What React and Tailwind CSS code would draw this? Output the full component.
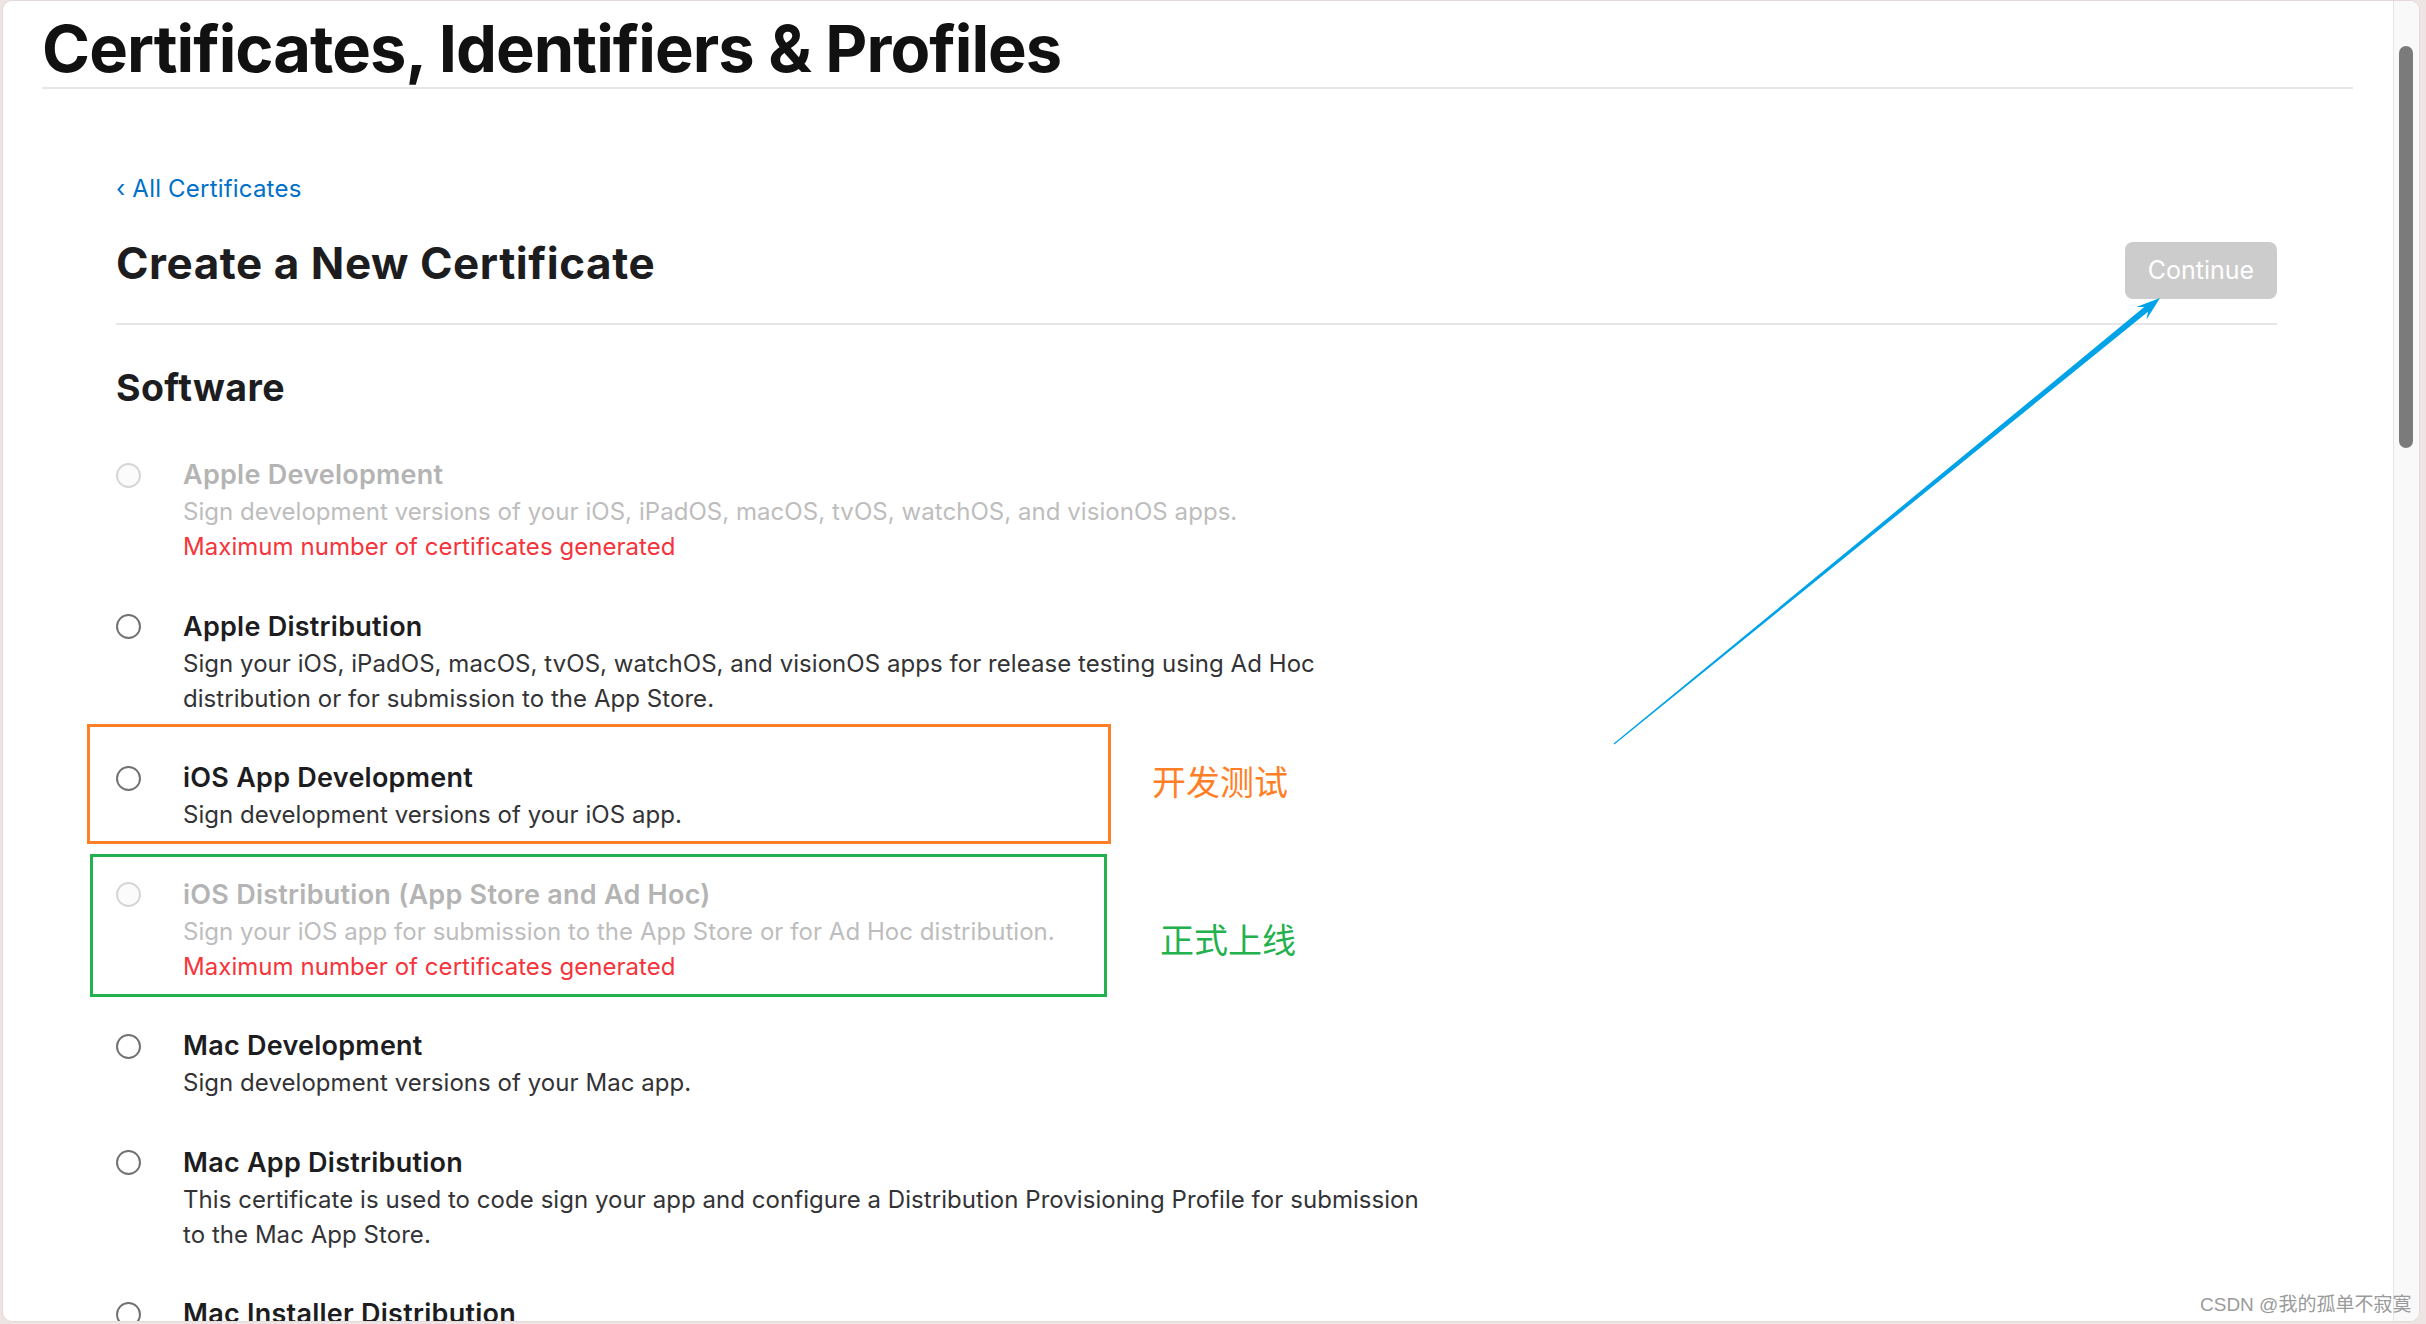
import React from "react";

const items = [
  {
    title: "Apple Development",
    lines: ["Sign development versions of your iOS, iPadOS, macOS, tvOS, watchOS, and visionOS apps."],
    disabled: true,
  },
  {
    title: "Apple Distribution",
    lines: [
      "Sign your iOS, iPadOS, macOS, tvOS, watchOS, and visionOS apps for release testing using Ad Hoc",
      "distribution or for submission to the App Store.",
    ],
  },
  {
    title: "iOS App Development",
    lines: ["Sign development versions of your iOS app."],
  },
  {
    title: "iOS Distribution (App Store and Ad Hoc)",
    lines: ["Sign your iOS app for submission to the App Store or for Ad Hoc distribution."],
    disabled: true,
  },
  {
    title: "Mac Development",
    lines: ["Sign development versions of your Mac app."],
  },
  {
    title: "Mac App Distribution",
    lines: [
      "This certificate is used to code sign your app and configure a Distribution Provisioning Profile for submission",
      "to the Mac App Store.",
    ],
  },
  {
    title: "Mac Installer Distribution",
    lines: [],
  },
];

function Item({ item }) {
  const d = item.disabled;
  return (
    <div className="flex">
      <div className="w-[67px] shrink-0 h-[38px] flex items-center">
        <div
          className={
            d
              ? "w-[25px] h-[25px] rounded-full border-2 border-[#d6d6d6] bg-[#fbfbfb]"
              : "w-[25px] h-[25px] rounded-full border-2 border-[#727272] bg-white"
          }
        />
      </div>
      <div className="flex flex-col">
        <div
          className={
            "text-[27px] leading-[38px] font-semibold tracking-[0.25px] whitespace-nowrap " +
            (d ? "text-[#b4b4b4]" : "text-[#1d1d1f]")
          }
        >
          {item.title}
        </div>
        {item.lines.map((l, i) => (
          <div
            key={i}
            className={
              "text-[24px] leading-[35px] tracking-[0.05px] whitespace-nowrap " +
              (d ? "text-[#bdbdbd]" : "text-[#333336]")
            }
          >
            {l}
          </div>
        ))}
        {d && (
          <div className="text-[24px] leading-[35px] tracking-[0.05px] text-[#f5343c] whitespace-nowrap">
            Maximum number of certificates generated
          </div>
        )}
      </div>
    </div>
  );
}

export default function App() {
  return (
    <div className="w-[2426px] h-[1324px] relative overflow-hidden bg-[#efe4e4] pl-[2px] pr-[6px] pb-[2px] font-['Inter','Noto_Sans_CJK_SC',sans-serif]">
      <div className="h-full flex bg-white rounded-[10px] border border-[#e3d9d9] overflow-hidden">
        <div className="flex-1 min-w-0 flex flex-col">
          <div className="ml-[39px] mr-[40px] pt-[10px] border-b-2 border-[#e6e6e6]">
            <h1 className="text-[65px] leading-[76px] font-bold tracking-[-0.95px] text-[#111111] whitespace-nowrap">
              Certificates, Identifiers &amp; Profiles
            </h1>
          </div>
          <div className="ml-[113px] mr-[116px] flex flex-col">
            <a className="mt-[82px] text-[24px] leading-[36px] text-[#0070c9] tracking-[0.2px] whitespace-nowrap">
              ‹ All Certificates
            </a>
            <div className="mt-[28px] pb-[24px] flex justify-between items-start border-b-2 border-[#e6e6e6]">
              <h2 className="text-[44px] leading-[56px] font-bold tracking-[0.55px] text-[#1d1d1f] whitespace-nowrap">
                Create a New Certificate
              </h2>
              <button className="mt-[7px] w-[152px] h-[57px] rounded-[8px] bg-[#cccccc] text-white text-[25px] tracking-[0px]">
                Continue
              </button>
            </div>
            <h3 className="mt-[41px] text-[37.5px] leading-[44px] font-bold tracking-[0.4px] text-[#1d1d1f]">
              Software
            </h3>
            <div className="mt-[46px] flex flex-col gap-[43.5px]">
              {items.map((it, i) => (
                <Item key={i} item={it} />
              ))}
            </div>
          </div>
        </div>
        <div className="w-[26px] shrink-0 bg-[#f9f9f9] border-l border-[#e5e5e5]">
          <div className="mt-[45px] ml-[5px] w-[14px] h-[402px] rounded-full bg-[#7b7b7b]" />
        </div>
      </div>

      {/* annotations */}
      <div className="absolute left-[87px] top-[724px] w-[1024px] h-[120px] border-[3px] border-[#ff7f27]" />
      <div className="absolute left-[90px] top-[854px] w-[1017px] h-[143px] border-[3px] border-[#22b14c]" />
      <div className="absolute left-[1152px] top-[760px] text-[34px] leading-[42px] text-[#ff7f27] font-['Noto_Sans_CJK_SC',sans-serif]">
        开发测试
      </div>
      <div className="absolute left-[1160px] top-[918px] text-[34px] leading-[42px] text-[#22b14c] font-['Noto_Sans_CJK_SC',sans-serif]">
        正式上线
      </div>
      <svg className="absolute left-0 top-0 pointer-events-none" width="2426" height="1324" viewBox="0 0 2426 1324">
        <polygon
          points="1613.6,743.5 2144.2,307.1 2136.3,307.0 2160,298 2146.5,319.4 2148.0,311.7 1614.4,744.5"
          fill="#00a2e8"
        />
      </svg>
      <div className="absolute left-[2200px] top-[1292px] text-[19px] leading-[26px] text-[#9a9a9a] whitespace-nowrap font-['Liberation_Sans','Noto_Sans_CJK_SC',sans-serif]">
        CSDN @我的孤单不寂寞
      </div>
    </div>
  );
}
